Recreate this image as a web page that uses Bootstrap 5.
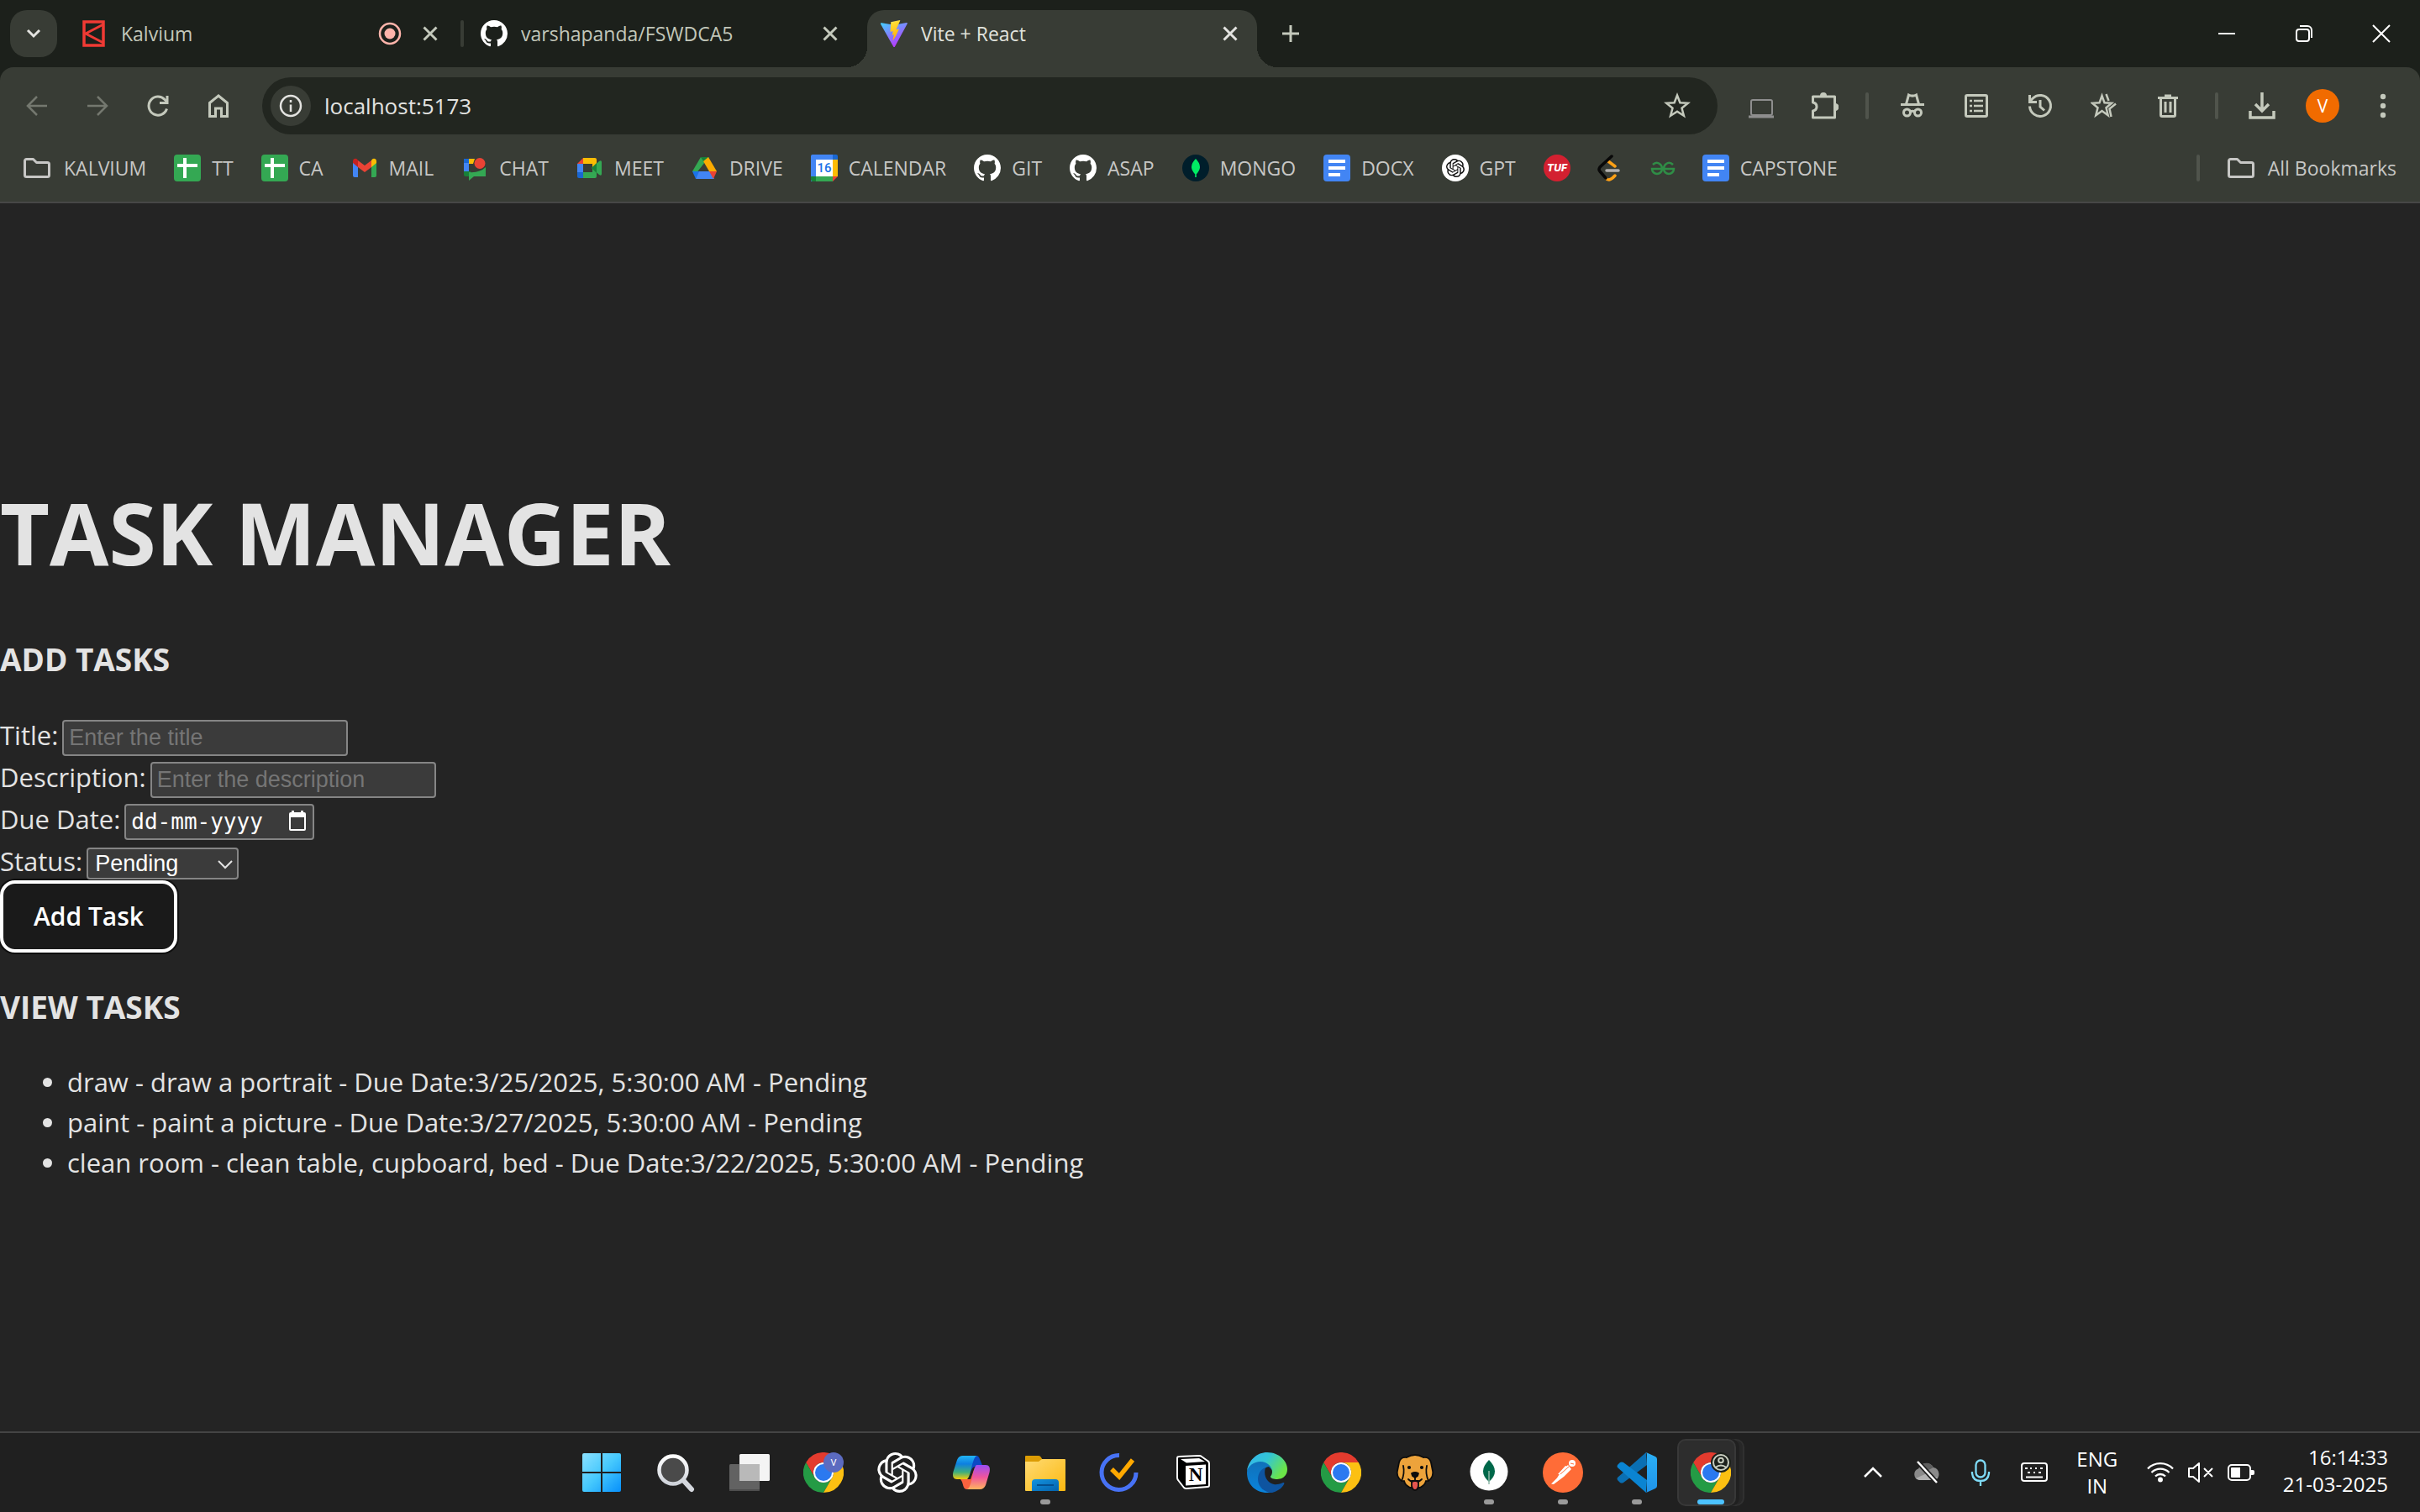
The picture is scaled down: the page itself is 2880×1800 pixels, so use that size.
<!DOCTYPE html>
<html lang="en">
<head>
<meta charset="utf-8">
<meta name="viewport" content="width=device-width, initial-scale=1">
<title>Vite + React</title>
<link rel="stylesheet" href="https://cdn.jsdelivr.net/npm/bootstrap@5.3.0/dist/css/bootstrap.min.css">
<style>
:root{--strip:#1c201b;--bar:#383c35;--omni:#222620;--ink:#c4c9bc;--text:#c7c7c5;--page:#242424;--field:#3b3b3b;--edge:#858585}
body{background:var(--page);color:#e3e3e3;font-family:"Open Sans","Noto Sans",sans-serif;font-size:31px;line-height:48px}
svg{display:block;flex:none}
.ui-text{font-size:23px;line-height:32px;color:var(--text);white-space:nowrap}
.i32{width:32px;height:32px}
.i48{width:48px;height:48px}
.line{fill:none;stroke:currentColor}
.icon-btn{width:56px;height:56px;color:var(--ink);display:flex;align-items:center;justify-content:center;padding:0;border:0;background:none;flex:none}
.icon-btn.dim{color:#74786f}
.sep{width:4px;height:32px;border-radius:2px;background:#50544c;flex:none}

/* tab strip */
.tab-strip{background:var(--strip);height:80px;padding:12px 12px 0;gap:12px}
.tab-search{background:var(--bar);border-radius:20px;color:#e3e3e0}
.page-tab{position:relative;flex:0 1 464px;height:68px;padding:0 16px 12px;gap:16px;min-width:0}
.page-tab .ui-text{flex:1;overflow:hidden;color:#c2c7ba}
.page-tab.current{background:var(--bar);border-radius:20px 20px 0 0}
.page-tab.current .ui-text{color:#e1e3dd}
.page-tab.current::before,.page-tab.current::after{content:"";position:absolute;bottom:0;width:24px;height:24px}
.page-tab.current::before{right:100%;background:radial-gradient(circle at 0 0,transparent 24px,var(--bar) 24px)}
.page-tab.current::after{left:100%;background:radial-gradient(circle at 100% 0,transparent 24px,var(--bar) 24px)}
.tab-sep{position:absolute;left:100%;margin-left:4px;top:12px;background:#383c35}
.small-btn{width:32px;height:32px}
.win-btns{gap:36px;padding-right:6px;height:56px}
.win-btns .icon-btn{color:#fff}

/* toolbar */
.bar-wrap{background:var(--strip)}
.bar-area{background:var(--bar);border-radius:16px 16px 0 0;border-bottom:2px solid #474747}
.tool-row{padding:12px 16px 0;gap:16px}
.omnibox{background:var(--omni);height:68px;border-radius:34px;padding:0 20px 0 10px;margin:0 8px;gap:16px}
.omnibox input{background:none;border:0;outline:0;color:#e3e3e0;font-size:26px;line-height:40px;min-width:0;padding:0}
.site-info{width:48px;height:48px;border-radius:50%;background:var(--bar);color:#e3e3e0}
.pinned{gap:20px}
.pinned + .sep{margin-left:4px}
.pinned-tools + .sep{margin-left:12px}
.avatar{width:40px;height:40px;border-radius:50%;background:#f16b00;color:#fff;font-size:21px;line-height:40px}
.marks-row{height:80px;padding:0 28px;gap:33px}
.marks-row a{display:flex;align-items:center;gap:13px;text-decoration:none}
.marks-row a.dir{gap:16px}
.marks-row a.alone{margin-right:-2px}

/* task page */
h1.main-title{font-size:102px;line-height:112px;font-weight:700;margin:68px 0 67px}
h3.part-title{font-size:37px;line-height:56px;font-weight:700;margin:0 0 37px}
form + h3.part-title{margin-top:37px}
.field-row{display:flex;align-items:baseline;gap:5px;line-height:50px}
.fld{background:var(--field);border:2px solid var(--edge);border-radius:4px;height:43px;padding:0 6px;color:#fff;font-family:"Liberation Sans",Arial,sans-serif;font-size:27px;line-height:30px}
.fld::placeholder{color:#757575;opacity:1}
.fld.wide-fld{width:340px}
.date-box{position:relative;display:flex;align-items:baseline}
.fld.date-fld{width:226px;font-family:"DejaVu Sans Mono",monospace;font-size:26px}
.fld.date-fld::placeholder{color:#fff}
.date-btn{position:absolute;right:7px;top:8px;width:26px;height:28px;color:#fff}
.pick-box{position:relative;display:flex;align-items:baseline}
select.fld{appearance:none;width:181px;height:38px;padding:0 8px}
.pick-box svg{position:absolute;right:7px;top:11px;pointer-events:none}
.add-btn{background:#1a1a1a;color:#fff;border:4px solid #fff;border-radius:18px;box-shadow:0 0 0 2px #101010;width:211px;height:86px;margin-top:-2px;font-size:30px;font-weight:600;line-height:48px;padding:0}
ul.task-items{margin:0 0 28px;padding-left:80px}

/* taskbar */
.task-bar{background:#202020;border-top:2px solid #444;height:96px}
.tb-left{flex:112 1 0}
.tb-right{flex:127 1 0;padding-right:38px}
.app{position:relative;width:88px;height:80px;display:flex;align-items:center;justify-content:center;padding:0;border:0;background:none}
.app svg{position:relative}
.app.open::after{content:"";position:absolute;left:38px;bottom:2px;width:12px;height:6px;border-radius:3px;background:#9a9a9a}
.app.focused::after{left:28px;width:32px;background:#4cc2ff}
.app .tile{position:absolute;left:4px;top:0;width:70px;height:80px;border-radius:10px;background:#2d2d2d;border:2px solid #383838}
.app .tile.back{left:24px;width:60px;background:#272727;border-color:#303030}
.app .tile.front{box-shadow:4px 0 0 #202020}
.tray-btn{width:64px;height:80px;color:#fff;padding:0;border:0;background:none;display:flex;align-items:center;justify-content:center}
.tray-btn.narrow{width:48px}
.tray-text{font-size:24px;line-height:32px;color:#fff}
.lang-box{width:86px}
.clock-box{margin-left:26px;padding-bottom:4px}
</style>
<script src="https://cdn.jsdelivr.net/npm/bootstrap@5.3.0/dist/js/bootstrap.bundle.min.js"></script>
</head>
<body class="d-flex flex-column min-vh-100">

<svg width="0" height="0" class="position-absolute" aria-hidden="true">
<defs>
<linearGradient id="gWin2" gradientUnits="userSpaceOnUse" x1="1" y1="1" x2="47" y2="47"><stop offset="0" stop-color="#8be1ff"/><stop offset=".5" stop-color="#45c8fd"/><stop offset="1" stop-color="#0790fb"/></linearGradient>
<linearGradient id="gRim" x1="0" y1="0" x2="0" y2="1"><stop offset="0" stop-color="#fff"/><stop offset="1" stop-color="#cfd3da"/></linearGradient>
<linearGradient id="gCopA" x1="0" y1="0" x2="0" y2="1"><stop offset="0" stop-color="#22b5f5"/><stop offset=".35" stop-color="#0d7fe0"/><stop offset=".7" stop-color="#3fae7c"/><stop offset="1" stop-color="#f6cc0c"/></linearGradient>
<linearGradient id="gCopB" x1="0" y1="0" x2="0" y2="1"><stop offset="0" stop-color="#9a4df5"/><stop offset=".5" stop-color="#f0559c"/><stop offset="1" stop-color="#ffb45e"/></linearGradient>
<linearGradient id="gEdgeTop" x1="0" y1="0" x2="1" y2=".5"><stop offset="0" stop-color="#33b4f2"/><stop offset=".5" stop-color="#33c5d4"/><stop offset="1" stop-color="#6be548"/></linearGradient>
<linearGradient id="gEdgeMid" x1="0" y1="0" x2="0" y2="1"><stop offset="0" stop-color="#1070b8"/><stop offset="1" stop-color="#0a84dc"/></linearGradient>
<linearGradient id="gFold" x1="0" y1="0" x2="1" y2="1"><stop offset="0" stop-color="#ffdb73"/><stop offset="1" stop-color="#fbb810"/></linearGradient>
<linearGradient id="gFoldB" x1="0" y1="0" x2="1" y2="1"><stop offset="0" stop-color="#1393e0"/><stop offset="1" stop-color="#0463ad"/></linearGradient>
<linearGradient id="gViteA" x1="0" y1="0" x2=".6" y2="1"><stop offset="0" stop-color="#41d1ff"/><stop offset="1" stop-color="#bd34fe"/></linearGradient>
<linearGradient id="gViteB" x1=".4" y1="0" x2=".6" y2="1"><stop offset="0" stop-color="#ffea83"/><stop offset=".1" stop-color="#ffdd35"/><stop offset="1" stop-color="#ffa800"/></linearGradient>
<linearGradient id="gCode" x1="0" y1="0" x2="0" y2="1"><stop offset="0" stop-color="#2bb0f5"/><stop offset="1" stop-color="#1f93ea"/></linearGradient>
<symbol id="github" viewBox="0 0 16 16"><path fill="#fff" d="M8 0C3.58 0 0 3.58 0 8c0 3.54 2.29 6.53 5.47 7.59.4.07.55-.17.55-.38 0-.19-.01-.82-.01-1.49-2.01.37-2.53-.49-2.69-.94-.09-.23-.48-.94-.82-1.13-.28-.15-.68-.52-.01-.53.63-.01 1.08.58 1.23.82.72 1.21 1.87.87 2.33.66.07-.52.28-.87.51-1.07-1.78-.2-3.64-.89-3.64-3.95 0-.87.31-1.59.82-2.15-.08-.2-.36-1.02.08-2.12 0 0 .67-.21 2.2.82.64-.18 1.32-.27 2-.27s1.36.09 2 .27c1.53-1.04 2.2-.82 2.2-.82.44 1.1.16 1.92.08 2.12.51.56.82 1.27.82 2.15 0 3.07-1.87 3.75-3.65 3.95.29.25.54.73.54 1.48 0 1.07-.01 1.93-.01 2.2 0 .21.15.46.55.38A8.01 8.01 0 0 0 16 8c0-4.42-3.58-8-8-8"/></symbol>
<symbol id="openai" viewBox="0 0 24 24"><path fill="currentColor" d="M22.2819 9.8211a5.9847 5.9847 0 0 0-.5157-4.9108 6.0462 6.0462 0 0 0-6.5098-2.9A6.0651 6.0651 0 0 0 4.9807 4.1818a5.9847 5.9847 0 0 0-3.9977 2.9 6.0462 6.0462 0 0 0 .7427 7.0966 5.98 5.98 0 0 0 .511 4.9107 6.051 6.051 0 0 0 6.5146 2.9001A5.9847 5.9847 0 0 0 13.2599 24a6.0557 6.0557 0 0 0 5.7718-4.2058 5.9894 5.9894 0 0 0 3.9977-2.9001 6.0557 6.0557 0 0 0-.7475-7.0729zm-9.022 12.6081a4.4755 4.4755 0 0 1-2.8764-1.0408l.1419-.0804 4.7783-2.7582a.7948.7948 0 0 0 .3927-.6813v-6.7369l2.02 1.1686a.071.071 0 0 1 .038.052v5.5826a4.504 4.504 0 0 1-4.4945 4.4944zm-9.6607-4.1254a4.4708 4.4708 0 0 1-.5346-3.0137l.142.0852 4.783 2.7582a.7712.7712 0 0 0 .7806 0l5.8428-3.3685v2.3324a.0804.0804 0 0 1-.0332.0615L9.74 19.9502a4.4992 4.4992 0 0 1-6.1408-1.6464zM2.3408 7.8956a4.485 4.485 0 0 1 2.3655-1.9728V11.6a.7664.7664 0 0 0 .3879.6765l5.8144 3.3543-2.0201 1.1685a.0757.0757 0 0 1-.071 0l-4.8303-2.7865A4.504 4.504 0 0 1 2.3408 7.872zm16.5963 3.8558L13.1038 8.364 15.1192 7.2a.0757.0757 0 0 1 .071 0l4.8303 2.7913a4.4944 4.4944 0 0 1-.6765 8.1042v-5.6772a.79.79 0 0 0-.407-.667zm2.0107-3.0231l-.142-.0852-4.7735-2.7818a.7759.7759 0 0 0-.7854 0L9.409 9.2297V6.8974a.0662.0662 0 0 1 .0284-.0615l4.8303-2.7866a4.4992 4.4992 0 0 1 6.6802 4.66zM8.3065 12.863l-2.02-1.1638a.0804.0804 0 0 1-.038-.0567V6.0742a4.4992 4.4992 0 0 1 7.3757-3.4537l-.142.0805L8.704 5.459a.7948.7948 0 0 0-.3927.6813zm1.0976-2.3654l2.602-1.4998 2.6069 1.4998v2.9994l-2.5974 1.4997-2.6067-1.4997Z"/></symbol>
<symbol id="chrome" viewBox="0 0 48 48"><path fill="#e33b2e" d="M24 12H44.8A24 24 0 0 0 3.2 12L13.6 30A12 12 0 0 1 24 12z"/><path fill="#249b45" d="M3.2 12A24 24 0 0 0 24 48L34.4 30A12 12 0 0 1 13.6 30z"/><path fill="#fcc012" d="M24 48A24 24 0 0 0 44.8 12H24A12 12 0 0 1 34.4 30z"/><circle cx="24" cy="24" r="12" fill="#fff"/><circle cx="24" cy="24" r="10" fill="#2b79f0"/></symbol>
<symbol id="folder" viewBox="0 0 32 32"><path fill="none" stroke="#c7c7c5" stroke-width="3" stroke-linejoin="round" d="M1.500 7.500a2 2 0 0 1 2-2h8l4 4h13a2 2 0 0 1 2 2v13a2 2 0 0 1-2 2h-25a2 2 0 0 1-2-2z"/></symbol>
<symbol id="sheet" viewBox="0 0 32 32"><rect width="32" height="32" rx="4" fill="#34a853"/><path d="M13 4v24M4 13h24" stroke="#fff" stroke-width="4"/></symbol>
<symbol id="doc" viewBox="0 0 32 32"><rect width="32" height="32" rx="4" fill="#4285f4"/><path d="M6 8h20M6 16h20M6 24h14" stroke="#fff" stroke-width="4"/></symbol>
<symbol id="cross" viewBox="0 0 32 32"><path class="line" stroke-width="3" d="M8.500 8.500l15 15M23.500 8.500l-15 15"/></symbol>
</defs>
</svg>

<header>
  <div class="tab-strip d-flex align-items-start">
    <button class="icon-btn tab-search" aria-label="Search tabs"><svg class="i32 line" viewBox="0 0 32 32" stroke-width="3"><path d="M9 12l7 7 7-7"/></svg></button>
    <div class="page-tab d-flex align-items-center">
      <svg class="i32" viewBox="0 0 32 32" fill="none" stroke="#f03a34"><path stroke-width="3.500" d="M4 2h23v28H4z"/><path stroke-width="3" d="M27 5L6 16l21 11"/></svg>
      <span class="ui-text">Kalvium</span>
      <svg class="i32" viewBox="0 0 32 32"><circle cx="16" cy="16" r="12" fill="none" stroke="#ffb4ab" stroke-width="2.500"/><circle cx="16" cy="16" r="6.500" fill="#ffb4ab"/></svg>
      <button class="icon-btn small-btn" aria-label="Close tab"><svg class="i32"><use href="#cross"/></svg></button>
      <span class="sep tab-sep"></span>
    </div>
    <div class="page-tab d-flex align-items-center">
      <svg class="i32"><use href="#github"/></svg>
      <span class="ui-text">varshapanda/FSWDCA5</span>
      <button class="icon-btn small-btn" aria-label="Close tab"><svg class="i32"><use href="#cross"/></svg></button>
    </div>
    <div class="page-tab current d-flex align-items-center">
      <svg class="i32" viewBox="0 0 32 32"><path fill="url(#gViteA)" d="M31.900 4L17 31.400a1 1 0 0 1-1.800 0L.1 4.700A1 1 0 0 1 1.200 3.200L16 5.800 30.900 3a1 1 0 0 1 1 1.200z"/><path fill="url(#gViteB)" d="M23 .1L12.300 2.200l-.8 11.600 3.200-.6-.9 4.600 2.100-.6-1.500 7.500L18 19l4-8.500-3.500.7L23.300.6z"/></svg>
      <span class="ui-text">Vite + React</span>
      <button class="icon-btn small-btn" aria-label="Close tab"><svg class="i32" color="#e3e3e0"><use href="#cross"/></svg></button>
    </div>
    <button class="icon-btn" aria-label="New tab"><svg class="i32 line" viewBox="0 0 32 32" stroke-width="3"><path d="M16 6v20M6 16h20"/></svg></button>
    <div class="win-btns d-flex ms-auto align-items-center">
      <button class="icon-btn" aria-label="Minimize"><svg class="i32 line" viewBox="0 0 32 32" stroke-width="2"><path d="M6 16h20"/></svg></button>
      <button class="icon-btn" aria-label="Restore"><svg class="i32 line" viewBox="0 0 32 32" stroke-width="2"><rect x="7" y="11" width="15" height="14" rx="3"/><path d="M11 7h9a5 5 0 0 1 5 5v9"/></svg></button>
      <button class="icon-btn" aria-label="Close"><svg class="i32 line" viewBox="0 0 32 32" stroke-width="2"><path d="M6 6l20 20M26 6L6 26"/></svg></button>
    </div>
  </div>

  <div class="bar-wrap"><div class="bar-area">
    <div class="tool-row d-flex align-items-center">
      <button class="icon-btn dim" aria-label="Back"><svg class="i32 line" viewBox="0 0 32 32" stroke-width="2.500"><path d="M28 16H5M16 5L5 16l11 11"/></svg></button>
      <button class="icon-btn dim" aria-label="Forward"><svg class="i32 line" viewBox="0 0 32 32" stroke-width="2.500"><path d="M4 16h23M16 5l11 11-11 11"/></svg></button>
      <button class="icon-btn" aria-label="Reload"><svg class="i32 line" viewBox="0 0 32 32" stroke-width="3"><path d="M26.500 19.500A11 11 0 1 1 24 8.500l3 3"/><path d="M27 4v8.500h-9"/></svg></button>
      <button class="icon-btn" aria-label="Home"><svg class="i32 line" viewBox="0 0 32 32" stroke-width="3"><path d="M5.500 12.500L16 4l10.500 8.500v16h-7V19h-7v9.500h-7z"/></svg></button>
      <div class="omnibox d-flex align-items-center flex-grow-1">
        <button class="icon-btn site-info" aria-label="Site information"><svg class="i32 line" viewBox="0 0 32 32" stroke-width="2.500"><circle cx="16" cy="16" r="12"/><path d="M16 14.500V23M16 9v3"/></svg></button>
        <input class="flex-grow-1" type="text" value="localhost:5173" aria-label="Address">
        <button class="icon-btn" aria-label="Bookmark this page"><svg class="i32 line" viewBox="0 0 32 32" stroke-width="2.500"><path d="M16 3.500l3.400 8.800 9.400.5-7.300 5.900 2.400 9.100L16 22.700l-7.900 5.100 2.400-9.100-7.300-5.900 9.400-.5z"/></svg></button>
      </div>
      <div class="pinned d-flex align-items-center">
        <button class="icon-btn" aria-label="Cast"><svg class="i32" viewBox="0 0 32 32" fill="none" stroke="#8e8e8e" stroke-width="2"><rect x="4" y="9" width="25" height="18" rx="2"/><path stroke-width="3" d="M1 29h30"/></svg></button>
        <button class="icon-btn" aria-label="Extensions"><svg class="i32" viewBox="0 0 32 32"><path class="line" stroke-width="3" stroke-linejoin="round" d="M1.500 5h26v25h-26v-8c6-1 6-9 0-10z"/><path fill="currentColor" d="M10 4a4 4 0 0 1 8 0zM28 13a4.500 4.500 0 0 1 0 9z"/></svg></button>
      </div>
      <span class="sep"></span>
      <div class="pinned pinned-tools d-flex align-items-center ms-2">
        <button class="icon-btn" aria-label="Incognito"><svg class="i32 line" viewBox="0 0 32 32" stroke-width="3"><path d="M2 14.500h28"/><path d="M8.500 14L11.500 3c3 1.500 6 1.500 9 0l3 11"/><circle cx="9.500" cy="24" r="4"/><circle cx="22.500" cy="24" r="4"/><path d="M13 23q3-1.500 6 0"/></svg></button>
        <button class="icon-btn" aria-label="Reading list"><svg class="i32 line" viewBox="0 0 32 32" stroke-width="3"><rect x="3.500" y="3.500" width="25" height="25" rx="1.500"/><path d="M8 10h3M8 16h3M8 22h3M13 10h11M13 16h11M13 22h11" stroke-width="2.500"/></svg></button>
        <button class="icon-btn" aria-label="History"><svg class="i32 line" viewBox="0 0 32 32" stroke-width="3"><path d="M3.500 16.500A12.500 12.500 0 1 0 7 7.200L4 10.500"/><path d="M3.500 3v8.500H12M16 9v8l5 4.500"/></svg></button>
        <button class="icon-btn" aria-label="Bookmarks"><svg class="i32 line" viewBox="0 0 32 32" stroke-width="2.500"><path d="M13.500 4l3 8.300 8.500.5-6.500 5.500 2.200 9L13.500 22l-7.200 5.300 2.200-9L2 12.800l8.500-.5z"/><path d="M18.500 2l3 8M24.500 29l-2-9.500 7.500-6"/></svg></button>
        <button class="icon-btn" aria-label="Delete browsing data"><svg class="i32 line" viewBox="0 0 32 32" stroke-width="3"><path d="M4 6.500h24M12 4h8M7.500 7v20a1.500 1.500 0 0 0 1.500 1.500h14a1.500 1.500 0 0 0 1.500-1.500V7M13 11v13M19 11v13"/></svg></button>
      </div>
      <span class="sep"></span>
      <button class="icon-btn ms-2" aria-label="Downloads"><svg class="i32 line" viewBox="0 0 32 32" stroke-width="3.500"><path d="M16 0v22M8 14l8 8 8-8M2 22v8h28v-8"/></svg></button>
      <button class="icon-btn" aria-label="Profile"><span class="avatar">V</span></button>
      <button class="icon-btn" aria-label="Menu"><svg class="i32" viewBox="0 0 32 32" fill="currentColor"><circle cx="16" cy="5" r="3.200"/><circle cx="16" cy="16" r="3.200"/><circle cx="16" cy="27" r="3.200"/></svg></button>
    </div>

    <nav class="marks-row d-flex align-items-center ui-text" aria-label="Bookmarks">
      <a class="ui-text dir" href="#"><svg class="i32"><use href="#folder"/></svg>KALVIUM</a>
      <a class="ui-text" href="#"><svg class="i32"><use href="#sheet"/></svg>TT</a>
      <a class="ui-text" href="#"><svg class="i32"><use href="#sheet"/></svg>CA</a>
      <a class="ui-text" href="#"><svg class="i32" viewBox="0 0 32 32"><path fill="#4285f4" d="M2 9l6 5v13H4a2 2 0 0 1-2-2z"/><path fill="#34a853" d="M30 9l-6 5v13h4a2 2 0 0 0 2-2z"/><path fill="#ea4335" d="M8 7l8 6 8-6v8l-8 6-8-6z"/><path fill="#c5221f" d="M2 8c0-3 3-4 5-2.500L8 7v8L2 10z"/><path fill="#fbbc04" d="M30 8c0-3-3-4-5-2.500L24 7v8l6-5z"/></svg>MAIL</a>
      <a class="ui-text" href="#"><svg class="i32" viewBox="0 0 32 32"><path fill="#1967d2" d="M3 5h6v5H3z"/><path fill="#4285f4" d="M3 10h6v10H3z"/><path fill="#fbbc04" d="M9 5h7l-2 6H9z"/><path fill="#188038" d="M3 20h8l2 6H5a2 2 0 0 1-2-2z"/><path fill="#34a853" d="M9 21q13 1 20-6v11H15l-6 5z"/><circle cx="22" cy="10.500" r="6.500" fill="#ea4335"/></svg>CHAT</a>
      <a class="ui-text" href="#"><svg class="i32" viewBox="0 0 32 32"><path fill="#ea4335" d="M8 4v7H1z"/><path fill="#fbbc04" d="M8 4h14a2 2 0 0 1 2 2v7l-5 3v-5H8z"/><path fill="#4285f4" d="M1 11h7v10H1z"/><path fill="#1967d2" d="M1 21h7v7H3a2 2 0 0 1-2-2z"/><path fill="#34a853" d="M8 21h11v-5l5 3v7a2 2 0 0 1-2 2H8zM18 16l9-8q3-2 3 1v14q0 3-3 1z"/><path fill="#188038" d="M18 16l6-6v12z"/></svg>MEET</a>
      <a class="ui-text" href="#"><svg class="i32" viewBox="0 0 32 32"><path fill="#34a853" d="M11 3L1 20l4 3L16 9z"/><path fill="#188038" d="M11 3h10l-5 8z"/><path fill="#fbab00" d="M20 3l10 17h-9L14 8z"/><path fill="#1a73e8" d="M1 20h9l-5 9z"/><path fill="#4285f4" d="M9 20h14l4 9H5z"/><path fill="#ea4335" d="M21 20h9l-4 9z"/></svg>DRIVE</a>
      <a class="ui-text" href="#"><svg class="i32" viewBox="0 0 32 32"><path fill="#4285f4" d="M2 0h24v32H0V2a2 2 0 0 1 2-2z"/><path fill="#1967d2" d="M26 0h4a2 2 0 0 1 2 2v4h-6z"/><path fill="#fbbc04" d="M26 6h6v20h-6z"/><path fill="#34a853" d="M6 26h20v6H6z"/><path fill="#188038" d="M0 26h6v6H2a2 2 0 0 1-2-2z"/><path fill="#ea4335" d="M26 26h6l-6 6z"/><path fill="#fff" d="M6 6h20v20H6z"/><text x="16" y="21" text-anchor="middle" font-family="Roboto" font-weight="500" font-size="15" fill="#1a73e8">16</text></svg>CALENDAR</a>
      <a class="ui-text" href="#"><svg class="i32"><use href="#github"/></svg>GIT</a>
      <a class="ui-text" href="#"><svg class="i32"><use href="#github"/></svg>ASAP</a>
      <a class="ui-text" href="#"><svg class="i32" viewBox="0 0 32 32"><circle cx="16" cy="16" r="16" fill="#001e2b"/><path fill="#00ed64" d="M16 5q10 10 0 19q-10-9 0-19zM15.200 20h1.600v7h-1.600z"/></svg>MONGO</a>
      <a class="ui-text" href="#"><svg class="i32"><use href="#doc"/></svg>DOCX</a>
      <a class="ui-text" href="#"><svg class="i32" viewBox="0 0 32 32"><circle cx="16" cy="16" r="16" fill="#fff"/><use href="#openai" x="5" y="5" width="22" height="22" color="#111"/></svg>GPT</a>
      <a class="alone" href="#" aria-label="Course site"><svg class="i32" viewBox="0 0 32 32"><circle cx="16" cy="16" r="16" fill="#d32030"/><text x="16" y="20" text-anchor="middle" font-family="Inter" font-weight="800" font-style="italic" font-size="12" fill="#fff">TUF</text></svg></a>
      <a class="alone" href="#" aria-label="Coding practice"><svg class="i32" viewBox="0 0 32 32" fill="none" stroke-width="3.500" stroke-linecap="round"><path stroke="#ffa116" d="M14 8l8 6M11 28q4 5 11-3"/><path stroke="#080808" d="M18 2L4 15q-2 3 0 5l7 8"/><path stroke="#b3b1b0" d="M12 19h14"/></svg></a>
      <a class="alone" href="#" aria-label="Tutorials"><svg class="i32" viewBox="0 0 32 32" fill="none" stroke="#2f8d46" stroke-width="2.500"><path d="M4 12q4-4 8-1 3 2 3 6a6 6 0 0 1-12 0h26a6 6 0 0 1-12 0q0-4 3-6 4-3 8 1"/></svg></a>
      <a class="ui-text" href="#"><svg class="i32"><use href="#doc"/></svg>CAPSTONE</a>
      <span class="sep ms-auto"></span>
      <a class="ui-text dir" href="#"><svg class="i32"><use href="#folder"/></svg>All Bookmarks</a>
    </nav>
  </div></div>
</header>

<main class="flex-grow-1 d-flex flex-column justify-content-center">
  <h1 class="main-title">TASK MANAGER</h1>
  <h3 class="part-title">ADD TASKS</h3>
  <form class="mb-0" onsubmit="return false">
    <div class="field-row"><label for="title">Title:</label><input class="fld wide-fld" id="title" type="text" placeholder="Enter the title"></div>
    <div class="field-row"><label for="desc">Description:</label><input class="fld wide-fld" id="desc" type="text" placeholder="Enter the description"></div>
    <div class="field-row"><label for="due">Due Date:</label>
      <div class="date-box"><input class="fld date-fld" id="due" type="text" placeholder="dd-mm-yyyy"><button type="button" class="icon-btn date-btn" aria-label="Show date picker"><svg width="26" height="28" viewBox="0 0 26 28"><path fill="currentColor" fill-rule="evenodd" d="M3 4a2 2 0 0 1 2-2h1V0h3v2h8V0h3v2h1a2 2 0 0 1 2 2v18a2 2 0 0 1-2 2H5a2 2 0 0 1-2-2zM5 8v14h16V8z"/></svg></button></div></div>
    <div class="field-row"><label for="status">Status:</label>
      <div class="pick-box"><select class="fld" id="status"><option>Pending</option><option>Completed</option></select><svg class="line" width="18" height="18" viewBox="0 0 18 18" stroke="#fff" stroke-width="2"><path d="M1 5l8 8 8-8"/></svg></div></div>
    <button class="add-btn d-block" type="submit">Add Task</button>
  </form>
  <h3 class="part-title">VIEW TASKS</h3>
  <ul class="task-items">
    <li>draw - draw a portrait - Due Date:3/25/2025, 5:30:00 AM - Pending</li>
    <li>paint - paint a picture - Due Date:3/27/2025, 5:30:00 AM - Pending</li>
    <li>clean room - clean table, cupboard, bed - Due Date:3/22/2025, 5:30:00 AM - Pending</li>
  </ul>
</main>

<footer class="task-bar d-flex align-items-center">
  <div class="tb-left"></div>
  <div class="d-flex">
    <button class="app" aria-label="Start"><svg class="i48" viewBox="0 0 48 48" fill="url(#gWin2)"><path d="M3 1h20v22H1V3a2 2 0 0 1 2-2zM25 1h20a2 2 0 0 1 2 2v20H25zM1 25h22v22H3a2 2 0 0 1-2-2zM25 25h22v20a2 2 0 0 1-2 2H25z"/></svg></button>
    <button class="app" aria-label="Search"><svg class="i48" viewBox="0 0 48 48"><path d="M33 33l10 11" stroke="#d5d8de" stroke-width="6" stroke-linecap="round"/><circle cx="21" cy="21" r="16.500" fill="#4a4a4a" stroke="url(#gRim)" stroke-width="4.500"/></svg></button>
    <button class="app" aria-label="Task view"><svg class="i48" viewBox="0 0 48 48"><rect x="12" y="2" width="36" height="32" rx="1.500" fill="#f4f4f4"/><rect y="14" width="36" height="32" rx="1.500" fill="#626262"/><path fill="#b9b9b9" d="M12 14h24v20H12z"/><path fill="#4d4d4d" d="M0 44h36v1a1 1 0 0 1-1 1H1a1 1 0 0 1-1-1z"/></svg></button>
    <button class="app" aria-label="Chrome profile"><svg class="i48" viewBox="0 0 48 48"><use href="#chrome" width="48" height="48"/><circle cx="36" cy="12" r="12" fill="#5c6bc0"/><text x="36" y="16" text-anchor="middle" font-family="Roboto" font-size="11" fill="#fff">V</text></svg></button>
    <button class="app" aria-label="ChatGPT"><svg class="i48" color="#fff"><use href="#openai"/></svg></button>
    <button class="app" aria-label="Copilot"><svg class="i48" viewBox="-2 -4 48 48"><path fill="#0c49c4" d="M20 0h8c4 0 4 6 8 13h-9c-4 0-5 4-7 9z"/><path fill="#f9623f" d="M9 28h12l5-14-3 22q-2 4-6 4c-6 0-4-8-8-12z"/><path fill="url(#gCopA)" d="M12 0h17c-6 0-7 24-12 28H5c-4 0-6-3-4.500-9L5 5q2-5 7-5z"/><path fill="url(#gCopB)" d="M28 11h11c4 0 6 3 4.500 9L39 35q-2 5-7 5H16c7 0 7-25 12-29z"/></svg></button>
    <button class="app open" aria-label="File Explorer"><svg class="i48" viewBox="0 0 48 48"><path fill="#dc9c04" d="M1 4h15q2 0 3 2l3 5H0V5a1 1 0 0 1 1-1z"/><path fill="url(#gFold)" d="M0 11h16l4-3h27a1 1 0 0 1 1 1v36a1 1 0 0 1-1 1H1a1 1 0 0 1-1-1z"/><path fill="url(#gFoldB)" d="M8 46V36q0-4 4-4h24q4 0 4 4v10z"/><path d="M14 39h20" stroke="#044f8e" stroke-width="2"/></svg></button>
    <button class="app" aria-label="TickTick"><svg class="i48" viewBox="0 0 48 48" fill="none"><path stroke="#4772f5" stroke-width="5" d="M24 3.500A20.500 20.500 0 1 0 44 24"/><path stroke="#ffa900" stroke-width="5.500" d="M15 20l9 9L40 9"/></svg></button>
    <button class="app" aria-label="Notion"><svg class="i48" viewBox="0 0 48 48"><path fill="#000" stroke="#fff" stroke-width="2" stroke-linejoin="round" d="M5 7q0-2 2-2l24-1q2 0 3 1l7 5q2 1 2 3v26q0 2-2 2l-25 2q-2 0-3-1l-7-9q-1-1-1-3z"/><path fill="#fff" d="M9 8l22-1 7 4-22 1.500zM15 16l24-1.500V38l-24 1.500z"/><text x="27" y="34" text-anchor="middle" font-family="Liberation Serif" font-weight="700" font-size="23" fill="#000">N</text></svg></button>
    <button class="app" aria-label="Edge"><svg class="i48" viewBox="0 0 48 48"><path fill="url(#gEdgeMid)" d="M0 24C0 38 10 48 24 48q4 0 7-1C20 46 15 39 15 31 15 24 20 18 26 17l5 5C30 15 23 10 15 10 7 10 0 16 0 24z"/><path fill="#0e54a0" d="M22 18c-6 2-9 8-9 14 0 9 8 16 17 16 7-2 12-6 14-10 1-2 0-2.500-2-1.500-4 1.500-7 2-10 1.500-8-2-13-10-10-20z"/><path fill="url(#gEdgeTop)" d="M0 22C2 9 12 0 24 0c14 0 24 10 24 20 0 8-6 12-12 12-4 0-8-1-8-3 0-1 2-2 2-6 0-6-6-12-14-12-8 0-14 5-16 11z"/></svg></button>
    <button class="app" aria-label="Chrome"><svg class="i48"><use href="#chrome"/></svg></button>
    <button class="app" aria-label="Dog"><svg class="i48" viewBox="0 0 48 48" stroke="#0d0d0d" stroke-width="1.800" stroke-linejoin="round" stroke-linecap="round"><path fill="#eda33b" d="M14 6q10-6 20 0 7-1 9 6l2 10q1 5-2 9-3 4-6 3-1 5-7 8H18q-6-3-7-8-3 1-6-3-3-4-2-9l2-10q2-7 9-6z"/><path fill="none" d="M10 16q2 9-2 18M38 16q-2 9 2 18"/><path fill="#e5554f" d="M20 34h8v6q-1 5-4 5t-4-5z"/><path fill="none" d="M24 29v4q-3 4-8-1M24 33q3 4 8-1"/><path fill="#0d0d0d" d="M20 25q4-2 8 0l-1 3-3 2-3-2z"/><circle cx="17" cy="18" r="1.200" fill="#0d0d0d"/><circle cx="32" cy="18" r="1.200" fill="#0d0d0d"/></svg></button>
    <button class="app open" aria-label="MongoDB Compass"><svg class="i48" viewBox="0 0 48 48"><circle cx="24" cy="23" r="22.500" fill="#fff"/><path fill="#00684a" d="M24 9q14 14 0 26q-14-12 0-26z"/><path d="M24 22v16" stroke="#8fb9a8" stroke-width="1.500"/></svg></button>
    <button class="app open" aria-label="Postman"><svg class="i48" viewBox="0 0 48 48"><circle cx="24" cy="24" r="24" fill="#ff6c37"/><circle cx="35" cy="13" r="4" fill="#fff"/><path fill="#fff" d="M30 15l4 5-9 9-12 9-3-.5 7-7 5-8zM18 26l9-10 3 1-9 9z"/><path fill="none" stroke="#ff6c37" d="M21 26l10-9M33 13l4 1"/></svg></button>
    <button class="app open" aria-label="Visual Studio Code"><svg class="i48" viewBox="0 0 48 48"><path fill="#0a6fb3" d="M35 0l1 15L8 36q-2 1-4 0l-3-3q-1-1.500 0-3z"/><path fill="#0a84d2" d="M35 48l1-15L8 12q-2-1-4 0l-3 3q-1 1.500 0 3z"/><path fill="url(#gCode)" d="M35 0l11 5q2 1 2 3v32q0 2-2 3l-11 5q1-1 1-3V3q0-2-1-3z"/></svg></button>
    <button class="app open focused" aria-label="Chrome, current window"><span class="tile back"></span><span class="tile front"></span><svg class="i48" viewBox="0 0 48 48"><use href="#chrome" width="48" height="48"/><circle cx="36" cy="12" r="12" fill="#1c201b"/><g fill="none" stroke="#c9cec0" stroke-width="2"><circle cx="36" cy="12" r="9"/><circle cx="36" cy="9.500" r="2.800"/><path d="M29.500 18q6.500-5 13 0"/></g></svg></button>
  </div>
  <div class="tb-right d-flex align-items-center justify-content-end">
    <button class="tray-btn" aria-label="Hidden icons"><svg class="i32 line" viewBox="0 0 32 32" stroke-width="2.500"><path d="M6 21l10-10 10 10"/></svg></button>
    <button class="tray-btn" aria-label="OneDrive"><svg class="i32" viewBox="0 0 32 32"><path fill="#8a8a8a" d="M7 25a7 7 0 0 1-1-13.500A10 10 0 0 1 24 10a8 8 0 0 1 2 15z"/><path fill="#5e5e5e" d="M11 6q8-4 13 4l-6 3z"/><path fill="#b0b0b0" d="M3 23l13-6 13 5q-1 3-5 3H7z"/><path d="M5 3l23 25" stroke="#202020" stroke-width="6"/><path d="M5 3l23 25" stroke="#fff" stroke-width="2.500"/></svg></button>
    <button class="tray-btn" aria-label="Microphone"><svg class="i32" viewBox="0 0 32 32" fill="none" stroke="#7fdbf7" stroke-width="2.300"><rect x="10.500" y="1.500" width="11" height="20" rx="5.500"/><path d="M6 15v2q1 9 10 9t10-9v-2M16 26v6"/></svg></button>
    <button class="tray-btn" aria-label="Touch keyboard"><svg class="i32 line" viewBox="0 0 32 32" stroke-width="2"><rect x="1" y="5" width="30" height="21" rx="3"/><path d="M5 11h3M11 11h2M17 11h2M23 11h3M8 16h3M15 16h2M21 16h3M6 21.500h20"/></svg></button>
    <div class="tray-text lang-box text-center">ENG<br>IN</div>
    <button class="tray-btn narrow ms-2" aria-label="Wi-Fi"><svg class="i32 line" viewBox="0 0 32 32" stroke-width="2.300"><path d="M1 11.500a21 21 0 0 1 30 0M5.500 16a15 15 0 0 1 21 0M10 20.500a8.500 8.500 0 0 1 12 0"/><circle cx="16" cy="24.500" r="1.800" fill="currentColor"/></svg></button>
    <button class="tray-btn narrow" aria-label="Volume muted"><svg class="i32 line" viewBox="0 0 32 32" stroke-width="2" stroke-linejoin="round"><path d="M2 11h5l7-6v22l-7-6H2zM20 11l10 10M30 11L20 21"/></svg></button>
    <button class="tray-btn narrow" aria-label="Battery"><svg class="i32" viewBox="0 0 32 32"><rect class="line" x="1" y="7" width="26" height="18" rx="4" stroke-width="2"/><path fill="currentColor" d="M4 11a1 1 0 0 1 1-1h10v12H5a1 1 0 0 1-1-1zM28 13h2a2 2 0 0 1 2 2v2a2 2 0 0 1-2 2h-2z"/></svg></button>
    <div class="tray-text clock-box text-end">16:14:33<br>21-03-2025</div>
  </div>
</footer>
</body>
</html>
